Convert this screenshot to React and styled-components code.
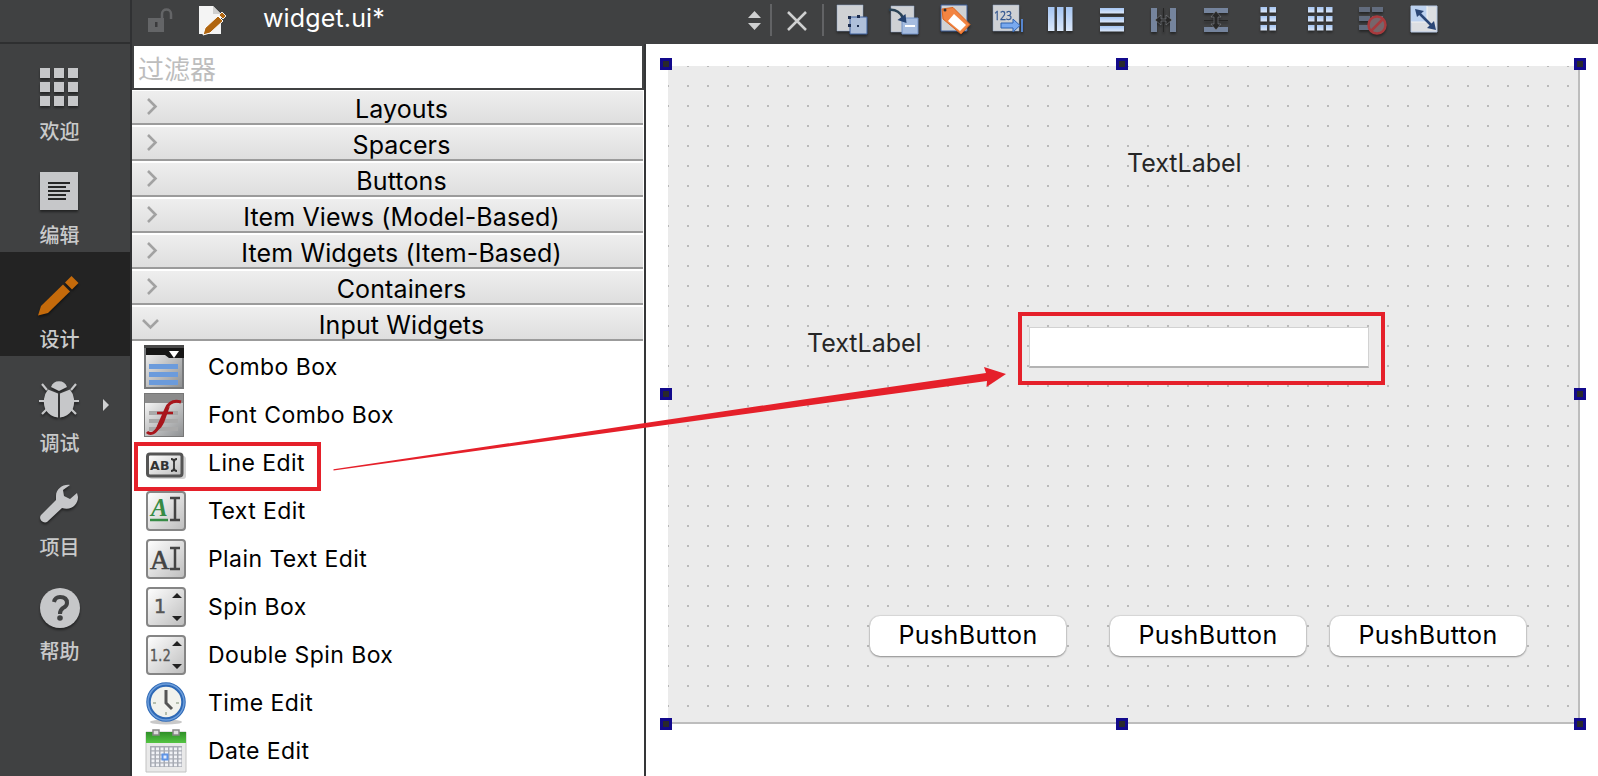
import React from "react";
import styled, { createGlobalStyle } from "styled-components";

const Global = createGlobalStyle`
  * { box-sizing: border-box; }
  body { margin: 0; background: #fff; overflow: hidden; font-family: Inter, "Noto Sans CJK SC", sans-serif; }
  svg { display: block; overflow: visible; }
`;

const Window = styled.div`
  position: relative;
  display: flex;
  width: 1598px;
  height: 776px;
  overflow: hidden;
`;

const ModeBar = styled.nav`
  width: 132px;
  flex: none;
  background: #404142;
  border-right: 2px solid #303133;
`;

const ModeBarTop = styled.div`
  height: 44px;
  border-bottom: 2px solid #2e2f30;
`;

const Mode = styled.div`
  height: 104px;
  padding-top: 24px;
  position: relative;
  background: ${(p) => (p.$active ? "#232323" : "transparent")};
  color: #c9cacb;
  font: 500 20px/28px "Noto Sans CJK SC", sans-serif;
  svg { margin-left: 40px; filter: drop-shadow(0 2px 1px rgba(0, 0, 0, 0.45)); }
`;

const ModeLabel = styled.div`
  margin: 9px 0 0 39.5px;
`;

const ModeArrow = styled.div`
  position: absolute;
  left: 103px;
  top: 43px;
  border-left: 6px solid #d0d1d2;
  border-top: 6px solid transparent;
  border-bottom: 6px solid transparent;
`;

const Workspace = styled.div`
  flex: 1;
  display: flex;
  flex-direction: column;
`;

const Header = styled.header`
  height: 44px;
  flex: none;
  display: flex;
  align-items: center;
  background: #404142;
`;

const FileArea = styled.div`
  width: 612px;
  height: 44px;
  display: flex;
`;

const FileName = styled.div`
  margin-left: 11px;
  color: #fff;
  font-size: 25px;
  line-height: 37px;
  letter-spacing: 0.15px;
`;

const Divider = styled.div`
  width: 2px;
  height: 32px;
  margin-bottom: 4px;
  background: #626365;
`;

const Tools = styled.div`
  display: flex;
  margin-left: 2px;
  svg { filter: drop-shadow(0 2px 1px rgba(0, 0, 0, 0.4)); }
`;

const Body = styled.div`
  flex: 1;
  display: flex;
`;

const WidgetBox = styled.aside`
  width: 514px;
  flex: none;
  border-right: 2px solid #353638;
  background: #fff;
`;

const Filter = styled.div`
  height: 46px;
  border: 2px solid #404142;
  background: #fff;
  padding-left: 4px;
  color: #bdbdbd;
  font: 26px/44px "Noto Sans CJK SC", sans-serif;
`;

const Category = styled.div`
  position: relative;
  height: ${(p) => (p.$first ? 35 : 36)}px;
  margin-right: 1px;
  border-top: ${(p) => (p.$first ? 1 : 2)}px solid #fff;
  border-bottom: 2px solid #9b9b9b;
  background: linear-gradient(#eeeeee, #dedede) padding-box;
  padding-left: 28px;
  text-align: center;
  font-size: 25px;
  line-height: 36px;
  letter-spacing: 0.13px;
  white-space: nowrap;
`;

const Chevron = styled.svg`
  position: absolute;
  left: 10px;
  top: 5px;
`;

const ItemList = styled.div`
  padding-top: 2px;
`;

const Item = styled.div`
  height: 48px;
  display: flex;
  align-items: center;
  padding-left: 12px;
  font-size: 23px;
  letter-spacing: 0.43px;
  white-space: nowrap;
`;

const ItemText = styled.span`
  margin-left: 20px;
  line-height: 48px;
`;

const Canvas = styled.main`
  flex: 1;
  padding: 22px 0 0 22px;
  background: #fff;
`;

const Form = styled.div`
  position: relative;
  width: 912px;
  height: 658px;
  border: solid #bdbdbd;
  border-width: 0 2px 2px 0;
  background: conic-gradient(from 0deg at 2px 2px, transparent 75%, #b9b9b9 0) -1px -1px / 20px 20px, #ebebeb;
`;

const FormLabel = styled.div`
  position: absolute;
  left: ${(p) => p.$x}px;
  top: ${(p) => p.$y}px;
  color: #262626;
  font-size: 25px;
  line-height: 32px;
  white-space: nowrap;
`;

const PushButton = styled.div`
  position: absolute;
  left: ${(p) => p.$x}px;
  top: 550px;
  width: 196px;
  height: 40px;
  border-radius: 10px;
  background: #fff;
  box-shadow: 0 0 1px 1px rgba(0, 0, 0, 0.08), 0 1px 2px rgba(0, 0, 0, 0.35);
  text-align: center;
  font-size: 25px;
  line-height: 38px;
  letter-spacing: 0.4px;
  color: #000;
`;

const LineEdit = styled.div`
  position: absolute;
  left: 361px;
  top: 261px;
  width: 340px;
  height: 41px;
  border: 1px solid #d2d2d2;
  border-bottom: 2px solid #b3b3b3;
  background: #fff;
`;

const Handle = styled.div`
  position: absolute;
  left: ${(p) => p.$x}px;
  top: ${(p) => p.$y}px;
  width: 12px;
  height: 12px;
  border: 3px solid #12098c;
  background: #29292c;
`;

const Frame = styled.div`
  position: absolute;
  left: ${(p) => p.$x}px;
  top: ${(p) => p.$y}px;
  width: ${(p) => p.$w}px;
  height: ${(p) => p.$h}px;
  border: 4px solid #e5202a;
`;

const ArrowOverlay = styled.svg`
  position: absolute;
  left: 0;
  top: 0;
`;

const grid = (xs, ys, w, h, fill) =>
  ys.flatMap((y) => xs.map((x) => <rect key={x + "-" + y} x={x} y={y} width={w} height={h} fill={fill} />));

const modeIcons = {
  grid: grid([0, 14, 28], [0, 14, 28], 10, 10, "#c6c7c9"),
  edit: (
    <g>
      <path d="M0 0h38v38H0z" fill="#c6c7c9" />
      <path d="M8 10h22M8 14h18M8 18h22M8 22h18M8 26h18" transform="translate(0 1)" stroke="#252525" strokeWidth="2" />
    </g>
  ),
  pencil: (
    <g fill="#c46a0b">
      <path d="M23 8.500l7 7L8 37l-10 2.500L1 30z" />
      <path d="M31.500 0l7 7-6.500 6.500-7-7z" />
    </g>
  ),
  bug: (
    <g fill="#c6c7c9">
      <path d="M11 7a8.500 8.500 0 0 1 16 0l-8 4z" />
      <path d="M8 9.500l10 4v24C7 36 3 28 4 19q1-6 4-9.500zM30 9.500l-10 4v24c11-1.500 15-9.500 14-18.500q-1-6-4-9.500z" />
      <path d="M2 4l5 6M36 4l-5 6M-1 21h6M33 21h6M2 34l6-6M36 34l-6-6" stroke="#c6c7c9" strokeWidth="2.200" />
    </g>
  ),
  wrench: (
    <path
      d="M30 1c-7-1-14 4-14 11v4L1 31c-3 4 2 9 6 7l15-14c9 3 16-3 16-11l-1-4-7 6-6-3-1-6z"
      fill="#c6c7c9"
    />
  ),
  help: (
    <g>
      <circle cx="20" cy="20" r="20" fill="#c6c7c9" />
      <path d="M14 14q1-5 6-5 7 0 7 6 0 3-4 5-3 2-3 6" fill="none" stroke="#404142" strokeWidth="4" />
      <circle cx="20" cy="30" r="2.8" fill="#404142" />
    </g>
  ),
};

const modes = [
  ["grid", "欢迎"],
  ["edit", "编辑"],
  ["pencil", "设计", true],
  ["bug", "调试"],
  ["wrench", "项目"],
  ["help", "帮助"],
];

const paper = "#cfd1d4";
const edge = "#3c5f9b";

const toolIcons = [
  <g>
    <path d="M11 5h26v26H11z" fill={paper} stroke="#8ea5cb" strokeWidth=".5" />
    <path d="M24 17h17v17H24z" fill="#aebfda" stroke={edge} />
    <path d="M22 16h3v3h-3zM31 15h3v3h-3zM22 24h3v3h-3zM31 25h2v2h-2z" fill="#1b2c4e" />
  </g>,
  <g>
    <path d="M13 6h23v26H13z" fill={paper} stroke="#8ea5cb" strokeWidth=".5" />
    <path d="M24 18h16v16H24z" fill="#a5bcdf" stroke="#7090c4" />
    <path d="M27 26h10" stroke="#fff" strokeWidth="2" />
    <path d="M11 10c7-1 12 3 14 8" fill="none" stroke="#2a4255" strokeWidth="2.500" />
    <path d="M19.500 20l8-6 1 9z" fill="#24426f" />
  </g>,
  <g>
    <path d="M11 5h26v26H11z" fill={paper} stroke={edge} />
    <path d="M12 9l11-1.500 17 17-9 9.500-18-15z" fill="#f28442" stroke="#d9641f" />
    <path d="M24 14l12 11-6 6-12-10z" fill="#fff" />
    <circle cx="15" cy="10" r="1.5" fill="#333" />
  </g>,
  <g>
    <path d="M11 5h26v26H11z" fill={paper} stroke="#8ea5cb" strokeWidth=".5" />
    <text x="12" y="20" fontSize="12.500" fontFamily="Open Sans" fill="#31558f" stroke="#31558f" strokeWidth=".3" textLength="18" lengthAdjust="spacingAndGlyphs">123</text>
    <path d="M19 23h12v-4l7 6.500-7 6.500v-4H19z" fill="#79a9ef" stroke="#2f62b0" />
    <path d="M40 19v13" stroke="#5585cf" strokeWidth="2" />
  </g>,
  <g>{grid([14, 23, 32], [7], 6.5, 24, "url(#blue)")}</g>,
  <g>{grid([14], [8, 17, 26], 24, 5.5, "url(#blue)")}</g>,
  <g>
    {grid([13, 32], [8], 6, 24, "#75849d")}
    <path d="M25.500 8v24" stroke="#262626" />
    <path d="M17 20l6-5v4h5v-4l6 5-6 5v-4h-5v4z" fill="#282828" stroke="#8e9298" strokeWidth=".5" />
  </g>,
  <g>
    {grid([14], [8, 27], 24, 5, "#75849d")}
    <path d="M14 20.500h24" stroke="#262626" />
    <path d="M26 11l5 6h-3v7h3l-5 6-5-6h3v-7h-3z" fill="#282828" stroke="#8e9298" strokeWidth=".5" />
  </g>,
  <g>{grid([18.5, 27.5], [7, 16, 25], 6.500, 5.500, "url(#blue)")}</g>,
  <g>{grid([14, 23, 32], [7, 16, 25], 6.500, 5.500, "url(#blue)")}</g>,
  <g>
    {grid([13, 26], [7, 16, 25], 11, 5, "#626c7e")}
    <circle cx="31" cy="25" r="8.500" fill="#77666b" stroke="#a83a3d" strokeWidth="2.500" />
    <path d="M25 31l12-12" stroke="#a83a3d" strokeWidth="2.500" />
  </g>,
  <g>
    <path d="M13 6h26v26H13z" fill="#dcdee2" stroke="#b5c7e4" />
    <path d="M13 6h16v16H13z" fill="#bdd2f0" />
    <path d="M29 6v16H13" fill="none" stroke="#f1f1f1" />
    <path d="M19 11l16 16" stroke="#2b4676" strokeWidth="2.500" />
    <path d="M17 9l9 2-7 6zM38 30l-9-2 7-7z" fill="#2b4676" />
  </g>,
];

const GlyphBox = () => (
  <rect x="3" y="3" width="38" height="38" rx="3" fill="url(#tile)" stroke="#858585" strokeWidth="2" />
);

const SpinArrows = () => <path d="M28 13l5-5 5 5zM28 31l5 5 5-5z" fill="#222" />;

const itemIcons = {
  combo: (
    <g>
      <path d="M0 0h40v44H0z" fill="#77797b" />
      <path d="M2 2h36v40H2z" fill="url(#steel)" />
      <path d="M0 0h40v13H25l-4-3H2V2z" fill="#161616" />
      <path d="M0 0h40v3H0z" fill="#4a4a4a" />
      <path d="M25 6h10l-5 7z" fill="#fff" />
      {grid([5], [19, 27, 35], 29, 5, "#6b9bdc")}
    </g>
  ),
  font: (
    <g>
      <path d="M0 0h40v44H0z" fill="#777" />
      <path d="M1 1h38v9H1z" fill="#8b8b8b" />
      <path d="M1 10h38v33H1z" fill="url(#steel)" />
      <path d="M5 20h29M5 28h29M5 36h29" stroke="#a9a9a9" strokeWidth="4" />
      <path d="M3 39c3 3 9 2 12-7l7-16c3-7 8-9 15-7" fill="none" stroke="#a8161c" strokeWidth="3" />
      <path d="M11 38l11-22 4-3-5 14c-2 6-5 10-10 11z" fill="#a8161c" />
      <path d="M13 20h16" stroke="#a8161c" strokeWidth="2.500" />
    </g>
  ),
  line: (
    <g>
      <rect x="5" y="15" width="37" height="23" rx="3" fill="#d4d4d4" />
      <rect x="3.500" y="13" width="34.500" height="22" rx="2.500" fill="url(#tile)" stroke="#555" strokeWidth="3" />
      <text x="6" y="29" fontSize="13" fontWeight="700" fontFamily="DejaVu Sans" fill="#333" textLength="20" lengthAdjust="spacingAndGlyphs">AB</text>
      <path d="M27 18q3 0 3 3v6q0 3-3 3M33 18q-3 0-3 3v6q0 3 3 3" fill="none" stroke="#333" strokeWidth="1.800" />
    </g>
  ),
  text: (
    <g>
      <GlyphBox />
      <text x="7" y="27" fontSize="25" fontWeight="700" fontStyle="italic" fontFamily="Liberation Serif" fill="#368b45">A</text>
      <path d="M6 31h18" stroke="#368b45" strokeWidth="2.500" />
      <path d="M26 9h10M26 31h10M31 9v22" stroke="#444" strokeWidth="2.500" />
    </g>
  ),
  plain: (
    <g>
      <GlyphBox />
      <text x="6" y="32" fontSize="27" fontFamily="Liberation Serif" fill="#444" stroke="#444" strokeWidth=".6">A</text>
      <path d="M26 11h10M26 32h10M31 11v21" stroke="#444" strokeWidth="2.500" />
    </g>
  ),
  spin: (
    <g>
      <GlyphBox />
      <text x="10" y="28" fontSize="19" fontFamily="DejaVu Sans" fill="#555" stroke="#555" strokeWidth=".5">1</text>
      <SpinArrows />
    </g>
  ),
  double: (
    <g>
      <GlyphBox />
      <text x="6" y="28" fontSize="16" fontFamily="DejaVu Sans" fill="#555" stroke="#555" strokeWidth=".4" textLength="21" lengthAdjust="spacingAndGlyphs">1.2</text>
      <SpinArrows />
    </g>
  ),
  time: (
    <g>
      <ellipse cx="22" cy="41" rx="16" ry="2.500" fill="#c9c9c9" />
      <circle cx="22" cy="21" r="17.500" fill="#f1f2ed" stroke="#2e69b6" strokeWidth="4.500" />
      <circle cx="22" cy="21" r="18" fill="none" stroke="#6d9edb" strokeWidth="1.500" />
      <path d="M22 9v13l6 6" fill="none" stroke="#555" strokeWidth="3" />
      <path d="M9 22h3M32 22h3M22 31v3" stroke="#b5bfae" strokeWidth="2" />
    </g>
  ),
  date: (
    <g>
      <path d="M2 3h40v40H2z" fill="#e9e9e9" stroke="#c2c2c2" />
      <path d="M2 3h40v11H2z" fill="url(#green)" />
      <path d="M9 1h6v5H9zM29 1h6v5h-6z" fill="#ddd" stroke="#888" strokeWidth="1.500" />
      <path d="M6 17h32v21H6z" fill="#a7abb4" />
      {grid([7.5, 12, 16.5, 21, 25.5, 30, 34.5], [18.500, 22.5, 26.500, 30.5, 34.5], 3, 2.8, "#f1f2f6")}
      <path d="M18.500 25.500h5v5h-5z" fill="#e3edff" stroke="#5f94e6" strokeWidth="2" />
    </g>
  ),
};

const items = [
  ["combo", "Combo Box"],
  ["font", "Font Combo Box"],
  ["line", "Line Edit"],
  ["text", "Text Edit"],
  ["plain", "Plain Text Edit"],
  ["spin", "Spin Box"],
  ["double", "Double Spin Box"],
  ["time", "Time Edit"],
  ["date", "Date Edit"],
];

const categories = [
  "Layouts",
  "Spacers",
  "Buttons",
  "Item Views (Model-Based)",
  "Item Widgets (Item-Based)",
  "Containers",
  "Input Widgets",
];

const Defs = () => (
  <defs>
    <linearGradient id="blue" x2="0" y2="1">
      <stop stopColor="#a5c5f2" />
      <stop offset="1" stopColor="#dce8fa" />
    </linearGradient>
    <linearGradient id="tile" x2="1" y2="1">
      <stop stopColor="#ffffff" />
      <stop offset="1" stopColor="#bdbdbd" />
    </linearGradient>
    <linearGradient id="steel" x2="1" y2="1">
      <stop stopColor="#f4f4f4" />
      <stop offset="1" stopColor="#8f9193" />
    </linearGradient>
    <linearGradient id="green" x2="0" y2="1">
      <stop stopColor="#2f8f28" />
      <stop offset="1" stopColor="#54c443" />
    </linearGradient>
  </defs>
);

export default function App() {
  return (
    <Window>
      <Global />
      <ModeBar>
        <ModeBarTop />
        {modes.map(([icon, label, active]) => (
          <Mode key={icon} $active={active}>
            <svg width="40" height="40">{modeIcons[icon]}</svg>
            <ModeLabel>{label}</ModeLabel>
            {icon === "bug" && <ModeArrow />}
          </Mode>
        ))}
      </ModeBar>
      <Workspace>
        <Header>
          <FileArea>
            <svg width="120" height="44">
              <path d="M16 18h16v14H16z" fill="#646567" />
              <path d="M30 20v-6c0-6 9-6 9 0v5" fill="none" stroke="#646567" strokeWidth="2.500" />
              <path d="M23 22h2.500v5H23z" fill="#3a3a3c" />
              <path d="M67 6h14l8 8v20H67z" fill="#f4f4f4" />
              <path d="M81 6v8h8z" fill="#cfcfcf" />
              <path d="M71 35l2-7 13-12 5 5-13 12z" fill="#b0650f" stroke="#fff" />
              <path d="M87 15l3-3 4 4-3 3z" fill="#b0650f" stroke="#eee" />
            </svg>
            <FileName>widget.ui*</FileName>
          </FileArea>
          <svg width="26" height="44">
            <path d="M4 18l6.500-7 6.500 7zM4 23l6.500 7 6.500-7z" fill="#cfd0d1" />
          </svg>
          <Divider />
          <svg width="50" height="44">
            <path d="M16 12l18 18M34 12L16 30" stroke="#cfd0d1" strokeWidth="2.500" />
          </svg>
          <Divider />
          <Tools>
            {toolIcons.map((icon, i) => (
              <svg key={i} width="52" height="44">{i === 0 && <Defs />}{icon}</svg>
            ))}
          </Tools>
        </Header>
        <Body>
          <WidgetBox>
            <Filter>过滤器</Filter>
            {categories.map((name, i) => (
              <Category key={name} $first={i === 0}>
                <Chevron width="20" height="22" fill="none" stroke="#a2a2a2" strokeWidth="2.600">
                  {i === 6 ? <path d="M1 8l7.500 7.500L16 8" /> : <path d="M6 3l7.500 7.500L6 18" />}
                </Chevron>
                {name}
              </Category>
            ))}
            <ItemList>
              {items.map(([icon, name]) => (
                <Item key={icon}>
                  <svg width="44" height="44">{itemIcons[icon]}</svg>
                  <ItemText>{name}</ItemText>
                </Item>
              ))}
            </ItemList>
          </WidgetBox>
          <Canvas>
            <Form>
              <FormLabel $x={459} $y={81}>TextLabel</FormLabel>
              <FormLabel $x={139} $y={261}>TextLabel</FormLabel>
              <LineEdit />
              {[202, 442, 662].map((x) => (
                <PushButton key={x} $x={x}>PushButton</PushButton>
              ))}
              {[-8, 322, 652].flatMap((y) =>
                [-8, 448, 906]
                  .filter((x) => !(x === 448 && y === 322))
                  .map((x) => <Handle key={x + "," + y} $x={x} $y={y} />)
              )}
            </Form>
          </Canvas>
        </Body>
      </Workspace>
      <Frame $x={134} $y={442} $w={187} $h={49} />
      <Frame $x={1018} $y={312} $w={367} $h={73} />
      <ArrowOverlay width="1598" height="776">
        <path d="M333.500 469.300L800 400l186-27-2-6 22 7-19.500 13 .5-6L800 406.500 333.500 470.500z" fill="#e5202a" />
      </ArrowOverlay>
    </Window>
  );
}
